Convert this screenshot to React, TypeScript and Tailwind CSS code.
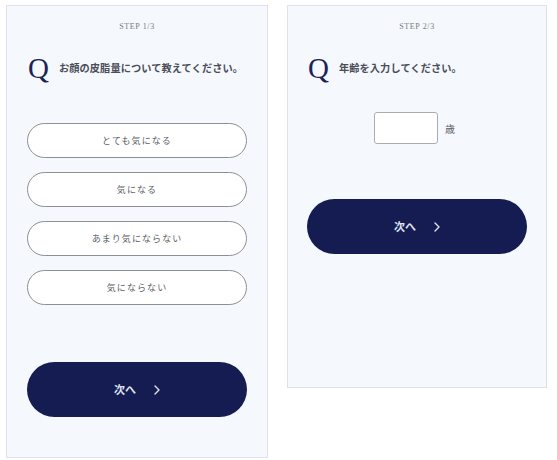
const options = ['とても気になる', '気になる', 'あまり気にならない', '気にならない'];

function StepLabel({ step }: { step: string }) {
  return (
    <p className="text-center text-[8px] leading-[10px] tracking-[0.08em] text-[#777b86] [font-family:'Liberation_Serif',serif]">
      STEP {step}
    </p>
  );
}

function Question({ text }: { text: string }) {
  return (
    <div className="flex items-center h-[30px]">
      <span className="text-[29px] leading-[30px] text-[#1c2456] [font-family:'Liberation_Serif',serif]">Q</span>
      <span className="ml-[10px] text-[10.2px] font-bold text-[#4a4d57] tracking-[0.01em]">{text}</span>
    </div>
  );
}

function NextButton() {
  return (
    <button className="flex h-[55px] w-full items-center justify-center rounded-full bg-[#141c52] text-[11px] font-bold text-[#dfe1ec]">
      <span>次へ</span>
      <svg className="ml-[18px]" width="6" height="10" viewBox="0 0 6 10" fill="none">
        <path d="M1 1l4 4-4 4" stroke="#dfe1ec" strokeWidth="1.4" strokeLinecap="round" strokeLinejoin="round" />
      </svg>
    </button>
  );
}

export default function App() {
  return (
    <div className="flex h-[460px] w-[557px] items-start bg-white pl-[6px] pt-[5px] [font-family:'Noto_Sans_CJK_JP','Noto_Sans',sans-serif]">
      {/* Step 1 */}
      <div className="flex h-[453px] w-[262px] flex-col border border-[#dde1e9] bg-[#f5f8fd] px-[20px] pt-[16px]">
        <StepLabel step="1/3" />
        <div className="mt-[21px] pl-[1px]">
          <Question text="お顔の皮脂量について教えてください。" />
        </div>
        <div className="mt-[40px] flex flex-col gap-[14px]">
          {options.map((o) => (
            <button
              key={o}
              className="flex h-[35px] w-full items-center justify-center rounded-full border border-[#8c8f96] bg-white text-[9px] tracking-[0.12em] text-[#5c5f66]"
            >
              {o}
            </button>
          ))}
        </div>
        <div className="mt-[57px]">
          <NextButton />
        </div>
      </div>

      {/* Step 2 */}
      <div className="ml-[19px] flex h-[383px] w-[260px] flex-col border border-[#dde1e9] bg-[#f5f8fd] px-[19px] pt-[16px]">
        <StepLabel step="2/3" />
        <div className="mt-[21px] pl-[1px]">
          <Question text="年齢を入力してください。" />
        </div>
        <div className="mt-[29px] flex items-center justify-center pr-[5px]">
          <div className="h-[32px] w-[64px] rounded-[3px] border border-[#a9acb3] bg-white" />
          <span className="ml-[7px] text-[10px] text-[#5c5f66]">歳</span>
        </div>
        <div className="mt-[55px]">
          <NextButton />
        </div>
      </div>
    </div>
  );
}
